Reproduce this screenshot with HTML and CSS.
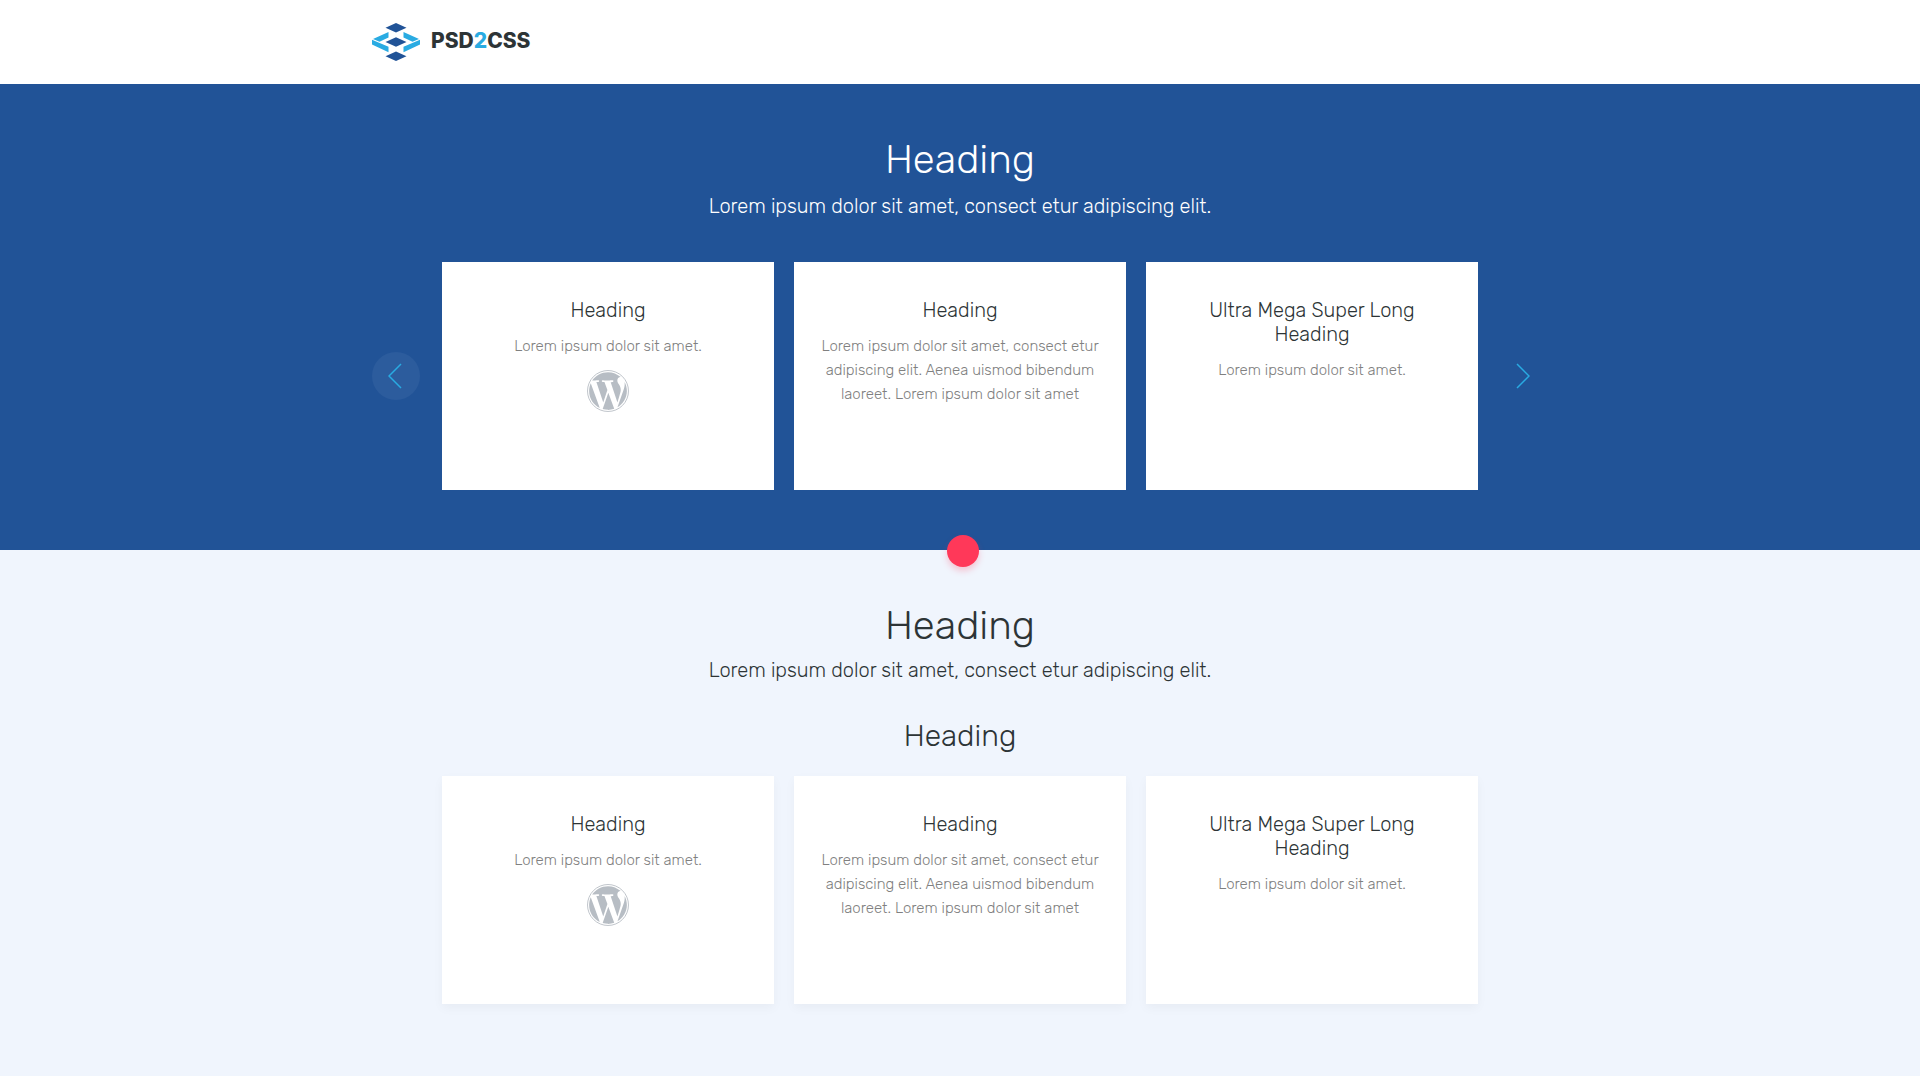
FILE: index.html
```html
<!DOCTYPE html>
<html lang="en">
<head>
<meta charset="utf-8">
<meta name="viewport" content="width=device-width, initial-scale=1">
<title>PSD2CSS</title>
<link rel="stylesheet" href="styles.css">
</head>
<body>
<svg class="sprite" aria-hidden="true">
  <symbol id="wordpress" viewBox="0 0 24 24">
    <circle cx="12" cy="12" r="11.7" fill="none" stroke="currentColor" stroke-width=".5"/>
    <path fill="currentColor" d="M21.469 6.825c.84 1.537 1.318 3.3 1.318 5.175 0 3.979-2.156 7.456-5.363 9.325l3.295-9.527c.615-1.54.82-2.771.82-3.864 0-.405-.026-.78-.07-1.11m-7.981.105c.647-.03 1.232-.105 1.232-.105.582-.075.514-.93-.067-.899 0 0-1.755.135-2.88.135-1.064 0-2.85-.15-2.85-.15-.585-.03-.661.855-.075.885 0 0 .54.061 1.125.09l1.68 4.605-2.37 7.08L5.354 6.9c.649-.03 1.234-.1 1.234-.1.585-.075.516-.93-.065-.896 0 0-1.746.138-2.874.138-.2 0-.438-.008-.69-.015C4.911 3.15 8.235 1.215 12 1.215c2.809 0 5.365 1.072 7.286 2.833-.046-.003-.091-.009-.141-.009-1.06 0-1.812.923-1.812 1.914 0 .89.513 1.643 1.06 2.531.411.72.89 1.643.89 2.977 0 .915-.354 1.994-.821 3.479l-1.075 3.585-3.9-11.61zM12 22.784c-1.059 0-2.081-.153-3.048-.437l3.237-9.406 3.315 9.087c.024.053.05.101.078.149-1.12.393-2.325.609-3.582.609M1.211 12c0-1.564.336-3.05.935-4.39L7.29 21.709C3.694 19.96 1.212 16.271 1.211 12"/>
  </symbol>
</svg>

<header class="header">
  <div class="container">
    <a class="logo" href="#">
      <svg class="logo-mark" viewBox="0 0 48 38" aria-hidden="true">
        <g fill="#215397">
          <path d="M24 0l10.500 4.700L24 9.400 13.500 4.700zM24 14.300L34.500 19 24 23.700 13.500 19zM24 28.600l10.500 4.700L24 38l-10.500-4.700z"/>
        </g>
        <g fill="#29abe2">
          <path d="M16.500 9v5.500L7.500 18.700 1 16zM31.500 9v5.500l9 4.200L47 16z"/>
          <path d="M0 16.800l16.500 7V29.200L0 21.500zM48 16.800l-16.500 7V29.200L48 21.500z"/>
        </g>
      </svg>
      <span class="logo-text">PSD<span class="logo-accent">2</span>CSS</span>
    </a>
  </div>
</header>

<main>
  <section class="section section-dark">
    <div class="container">
      <h1 class="title">Heading</h1>
      <p class="subtitle">Lorem ipsum dolor sit amet, consect etur adipiscing elit.</p>
      <div class="slider">
        <button class="arrow arrow-active" type="button" aria-label="Previous">
          <svg class="arrow-icon" viewBox="0 0 14 26" aria-hidden="true"><path d="M13 1L1 13l12 12"/></svg>
        </button>
        <div class="cards">
          <article class="card">
            <h2 class="card-title">Heading</h2>
            <p class="card-text">Lorem ipsum dolor sit amet.</p>
            <svg class="card-icon" aria-hidden="true"><use href="#wordpress"/></svg>
          </article>
          <article class="card">
            <h2 class="card-title">Heading</h2>
            <p class="card-text">Lorem ipsum dolor sit amet, consect etur adipiscing elit. Aenea uismod bibendum laoreet. Lorem ipsum dolor sit amet</p>
          </article>
          <article class="card">
            <h2 class="card-title">Ultra Mega Super Long Heading</h2>
            <p class="card-text">Lorem ipsum dolor sit amet.</p>
          </article>
        </div>
        <button class="arrow" type="button" aria-label="Next">
          <svg class="arrow-icon" viewBox="0 0 14 26" aria-hidden="true"><path d="M1 1l12 12L1 25"/></svg>
        </button>
      </div>
    </div>
    <span class="dot"></span>
  </section>

  <section class="section section-light">
    <div class="container">
      <h2 class="title">Heading</h2>
      <p class="subtitle">Lorem ipsum dolor sit amet, consect etur adipiscing elit.</p>
      <h3 class="group-title">Heading</h3>
      <div class="cards cards-inset">
        <article class="card">
          <h4 class="card-title">Heading</h4>
          <p class="card-text">Lorem ipsum dolor sit amet.</p>
          <svg class="card-icon" aria-hidden="true"><use href="#wordpress"/></svg>
        </article>
        <article class="card">
          <h4 class="card-title">Heading</h4>
          <p class="card-text">Lorem ipsum dolor sit amet, consect etur adipiscing elit. Aenea uismod bibendum laoreet. Lorem ipsum dolor sit amet</p>
        </article>
        <article class="card">
          <h4 class="card-title">Ultra Mega Super Long Heading</h4>
          <p class="card-text">Lorem ipsum dolor sit amet.</p>
        </article>
      </div>
    </div>
  </section>
</main>
</body>
</html>
```
FILE: styles.css
```css
* {
  box-sizing: border-box;
}

body {
  margin: 0;
  background: #f0f5fd;
  color: #2d3436;
  font-family: Rubik, Inter, "Liberation Sans", sans-serif;
  font-weight: 300;
}

h1, h2, h3, h4, p {
  margin: 0;
  font-weight: 300;
}

.sprite {
  display: none;
}

.container {
  max-width: 1176px;
  margin: 0 auto;
}

.header {
  padding: 23px 0;
  background: #fff;
}

.logo {
  display: flex;
  align-items: center;
  gap: 11px;
  width: fit-content;
  color: #2d3436;
  text-decoration: none;
}

.logo-mark {
  width: 48px;
  height: 38px;
}

.logo-text {
  padding-bottom: 3px;
  font-family: Inter, sans-serif;
  font-size: 21px;
  font-weight: 800;
  line-height: 24px;
}

.logo-accent {
  color: #29abe2;
}

.section {
  position: relative;
  text-align: center;
}

.section-dark {
  padding: 48px 0 60px;
  background: #215397;
}

.section-light {
  padding: 48px 0 72px;
}

.title {
  font-size: 40px;
  line-height: 56px;
}

.subtitle {
  font-size: 20px;
  line-height: 36px;
}

.section-light .subtitle {
  line-height: 32px;
}

.section-dark .title,
.section-dark .subtitle {
  color: #fff;
}

.slider {
  display: flex;
  align-items: center;
  gap: 22px;
  margin-top: 38px;
}

.arrow {
  display: flex;
  flex: none;
  align-items: center;
  justify-content: center;
  width: 48px;
  height: 48px;
  padding: 0 2px 0 0;
  border: 0;
  border-radius: 50%;
  background: none;
  cursor: pointer;
}

.arrow-active {
  background: #2c5c9d;
}

.arrow-icon {
  width: 14px;
  height: 26px;
  fill: none;
  stroke: #29abe2;
  stroke-width: 1.5;
}

.cards {
  display: grid;
  flex: 1;
  grid-template-columns: repeat(3, 1fr);
  gap: 20px;
}

.cards-inset {
  margin: 20px 70px 0;
}

.card {
  min-height: 228px;
  padding: 36px 24px 24px;
  background: #fff;
}

.section-light .card {
  box-shadow: 0 4px 10px rgba(0, 0, 0, .04);
}

.card-title {
  padding: 0 24px;
  color: #2d3436;
  font-size: 20px;
  line-height: 24px;
}

.card-text {
  margin-top: 12px;
  color: #808080;
  font-size: 15px;
  line-height: 24px;
}

.card-icon {
  width: 42px;
  height: 42px;
  margin-top: 12px;
  color: #b7bdc4;
}

.group-title {
  margin-top: 30px;
  font-size: 30px;
  line-height: 40px;
}

.dot {
  position: absolute;
  z-index: 1;
  bottom: -17px;
  left: calc(50% - 13px);
  width: 32px;
  height: 32px;
  border-radius: 50%;
  background: #ff3859;
  box-shadow: 0 4px 6px rgba(255, 56, 89, .25);
}
```
